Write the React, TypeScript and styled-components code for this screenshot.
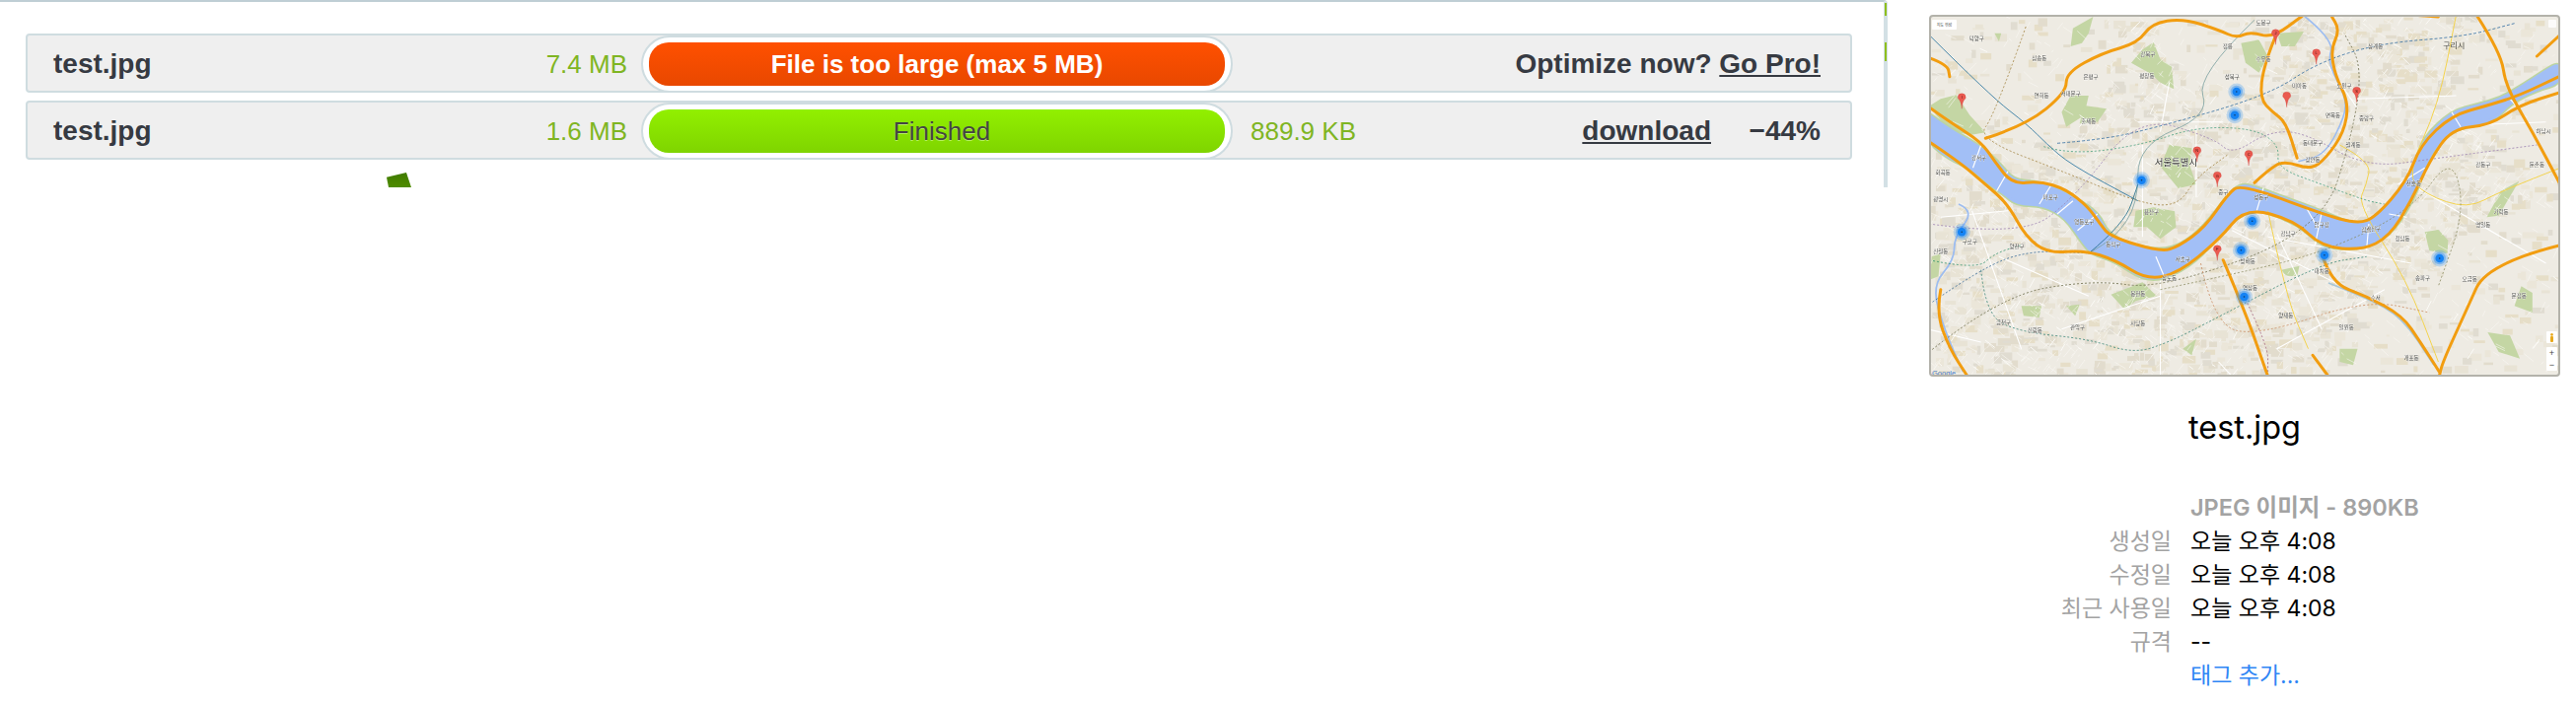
import React from "react";
import styled, { createGlobalStyle } from "styled-components";

const GlobalStyle = createGlobalStyle`
  html, body {
    margin: 0;
    padding: 0;
    background: #fff;
    overflow: hidden;
  }
`;

const Page = styled.div`
  display: flex;
  align-items: flex-start;
  width: 2612px;
  height: 714px;
  background: #fff;
`;

const Panel = styled.section`
  position: relative;
  box-sizing: border-box;
  flex: none;
  width: 1914px;
  height: 190px;
  padding: 32px 32px 0 26px;
  border-top: 2px solid #bfced5;
  border-right: 4px solid #d3e0e5;
  border-top-right-radius: 4px;
  display: flex;
  flex-direction: column;
  gap: 8px;
  font-family: "Liberation Sans", Arial, sans-serif;
  color: #363a42;
`;

const Row = styled.div`
  box-sizing: border-box;
  height: 60px;
  background: #efefef;
  border: 2px solid #cfdce0;
  border-radius: 4px;
  display: grid;
  grid-template-columns: 622px 600px 1fr;
  align-items: center;
`;

const Source = styled.div`
  display: flex;
  justify-content: space-between;
  align-items: baseline;
  padding: 0 14px 0 26px;
`;

const Name = styled.span`
  font-size: 28px;
  font-weight: 700;
`;

const Size = styled.span`
  font-size: 26px;
  color: #7fb523;
`;

const Pill = styled.div`
  box-sizing: border-box;
  height: 58px;
  padding: 5px 6px;
  background: #fff;
  border: 2px solid #cfdce0;
  border-radius: 29px;
`;

const Progress = styled.div<{ $tone: "error" | "done" }>`
  box-sizing: border-box;
  height: 44px;
  padding-left: ${(p) => (p.$tone === "done" ? "10px" : "0")};
  border-radius: 20px;
  display: flex;
  align-items: center;
  justify-content: center;
  font-size: 26px;
  font-weight: ${(p) => (p.$tone === "error" ? 700 : 400)};
  color: ${(p) => (p.$tone === "error" ? "#fff" : "#444")};
  text-shadow: ${(p) => (p.$tone === "done" ? "0 1px 0 #b6f060" : "none")};
  background: ${(p) =>
    p.$tone === "error"
      ? "linear-gradient(#ff5000, #e84800)"
      : "linear-gradient(#92f000, #7fd400)"};
`;

const Result = styled.div`
  display: flex;
  align-items: baseline;
  padding: 0 30px 0 18px;
  font-size: 28px;
`;

const Notice = styled.span`
  margin-left: auto;
  font-weight: 700;
`;

const Action = styled.a`
  color: inherit;
  font-weight: 700;
  text-decoration: underline;
`;

const Download = styled(Action)`
  margin-left: auto;
`;

const Saving = styled.span`
  flex: none;
  width: 111px;
  text-align: right;
  font-weight: 700;
`;

const Leaf = styled.div`
  position: absolute;
  left: 392px;
  top: 173px;
  width: 25px;
  height: 15px;
  background: linear-gradient(#3f7a00, #4f8c00);
  clip-path: polygon(0 32%, 80% 0, 100% 100%, 8% 100%);
`;

const Sliver = styled.div<{ $top: number; $height: number }>`
  position: absolute;
  right: -3px;
  top: ${(p) => p.$top}px;
  width: 2px;
  height: ${(p) => p.$height}px;
  background: #8fbf1e;
`;

const Details = styled.aside`
  flex: none;
  box-sizing: border-box;
  width: 640px;
  margin: 15px 0 0 42px;
`;

const MapFrame = styled.div`
  position: relative;
  box-sizing: border-box;
  width: 640px;
  height: 367px;
  border: 2px solid #b3b2aa;
  border-radius: 4px;
  overflow: hidden;
  background: #eeebe3;
`;

const MapArt = styled.svg`
  display: block;
  position: absolute;
  left: -2px;
  top: -2px;
  width: 640px;
  height: 367px;
  filter: blur(0.5px);
`;

const MapControl = styled.div`
  position: absolute;
  background: #fff;
  color: #444;
  border-radius: 1px;
  font-family: "Noto Sans CJK KR", "Liberation Sans", sans-serif;
`;

const TypeControl = styled(MapControl)`
  left: 1px;
  top: 3px;
  width: 25px;
  height: 10px;
  font-size: 4px;
  line-height: 10px;
  text-align: center;
`;

const ZoomControl = styled(MapControl)`
  right: 1px;
  bottom: 4px;
  width: 11px;
  height: 24px;
  font-size: 9px;
  line-height: 12px;
  text-align: center;
  font-family: "Liberation Sans", sans-serif;
`;

const Pegman = styled(MapControl)`
  right: 1px;
  bottom: 32px;
  width: 11px;
  height: 12px;
  display: flex;
  align-items: center;
  justify-content: center;
`;

const FullScreen = styled(MapControl)`
  right: 2px;
  top: 3px;
  width: 8px;
  height: 8px;
  opacity: 0.8;
`;

const GoogleMark = styled.span`
  position: absolute;
  left: 1px;
  bottom: -3px;
  font-family: "Liberation Sans", sans-serif;
  font-size: 7.5px;
  color: #4a7fd0;
`;

const FileTitle = styled.h2`
  margin: 32px 0 0;
  text-align: center;
  font-family: Inter, "Liberation Sans", sans-serif;
  font-size: 32.5px;
  line-height: 40px;
  font-weight: 400;
  color: #000;
`;

const InfoGrid = styled.dl`
  margin: 43px 0 0;
  display: grid;
  grid-template-columns: 246px 1fr;
  column-gap: 19px;
  font-family: Inter, "Noto Sans CJK KR", sans-serif;
  font-size: 23px;
  line-height: 34px;
`;

const Kind = styled.dd`
  grid-column: 2;
  margin: 0;
  color: #a3a3a3;
  font-size: 23.5px;
  line-height: 35px;
  font-weight: 600;
`;

const Label = styled.dt`
  grid-column: 1;
  color: #a3a3a3;
  text-align: right;
`;

const Value = styled.dd`
  grid-column: 2;
  margin: 0;
  color: #000;
`;

const TagLink = styled.a`
  grid-column: 2;
  color: #2f86f5;
`;

// the map art is traced from the reference, in a 1408x1100 space
const sx = (x: number) => +((x - 124) / 2.2).toFixed(1);
const sy = (y: number) => +((y - 44) / 3).toFixed(1);

function line(flat: number[]) {
  const pts: [number, number][] = [];
  for (let i = 0; i < flat.length; i += 2) pts.push([sx(flat[i]), sy(flat[i + 1])]);
  let d = `M${pts[0][0]} ${pts[0][1]}`;
  for (let i = 1; i < pts.length - 1; i++) {
    const mx = (pts[i][0] + pts[i + 1][0]) / 2;
    const my = (pts[i][1] + pts[i + 1][1]) / 2;
    d += `Q${pts[i][0]} ${pts[i][1]} ${mx.toFixed(1)} ${my.toFixed(1)}`;
  }
  const last = pts[pts.length - 1];
  return d + `L${last[0]} ${last[1]}`;
}

function polygon(flat: number[]) {
  const pts: string[] = [];
  for (let i = 0; i < flat.length; i += 2) pts.push(`${sx(flat[i])},${sy(flat[i + 1])}`);
  return pts.join(" ");
}

const river = [
  124, 350, 170, 395, 230, 440, 275, 490, 310, 550, 360, 555, 400, 570, 450, 605, 500, 650, 520, 710,
  570, 745, 640, 765, 690, 745, 740, 690, 790, 600, 820, 560, 860, 575, 930, 610, 1000, 645, 1060, 680,
  1100, 680, 1140, 640, 1190, 560, 1210, 500, 1230, 420, 1290, 340, 1350, 320, 1400, 300, 1450, 260,
  1500, 215, 1532, 190, 1532, 250, 1480, 270, 1420, 310, 1380, 370, 1300, 385, 1260, 430, 1230, 500,
  1210, 580, 1170, 680, 1120, 740, 1060, 755, 1000, 745, 960, 690, 900, 650, 840, 630, 800, 670, 770, 710,
  720, 790, 650, 845, 600, 845, 540, 790, 490, 770, 470, 740, 430, 660, 380, 622, 320, 620, 290, 585,
  260, 560, 220, 510, 170, 480, 124, 430,
];

const highways = [
  [124, 325, 170, 370, 240, 430, 270, 490, 310, 560, 370, 550, 430, 575, 480, 630, 505, 680, 530, 720, 640, 765, 680, 750, 740, 690, 790, 590, 820, 558, 1000, 650, 1080, 680, 1120, 660, 1190, 550, 1220, 440, 1290, 350, 1370, 320, 1440, 290, 1532, 230],
  [124, 430, 190, 490, 250, 560, 300, 620, 340, 720, 390, 770, 470, 760, 540, 790, 610, 850, 680, 830, 770, 730, 830, 630, 940, 670, 1000, 750, 1090, 760, 1150, 720, 1200, 610, 1240, 490, 1290, 390, 1375, 380, 1440, 320, 1532, 280],
  [250, 420, 340, 380, 430, 280, 430, 220, 510, 160, 590, 130, 620, 70, 690, 55, 770, 90, 810, 115, 840, 95, 890, 115, 960, 44],
  [895, 115, 870, 200, 862, 300, 890, 340, 920, 370, 945, 480],
  [850, 555, 890, 505, 920, 490, 975, 515, 1010, 480, 1050, 400, 1060, 310, 1030, 230, 1020, 150, 1040, 90, 1020, 44],
  [780, 790, 830, 950, 880, 1144],
  [1345, 44, 1400, 160, 1410, 260, 1470, 400, 1532, 560],
  [1532, 745, 1370, 800, 1320, 950, 1270, 1100, 1262, 1144],
  [1000, 770, 1020, 860, 1100, 900, 1180, 960, 1220, 1040, 1262, 1130],
  [150, 880, 140, 950, 170, 1060, 210, 1144],
  [980, 1080, 1015, 1144],
  [124, 175, 165, 195, 170, 232],
  [1200, 44, 1260, 50],
  [1480, 170, 1532, 105],
];

const yellowRoads = [
  [1532, 510, 1400, 580, 1325, 635, 1230, 590, 1190, 530, 1260, 320, 1300, 44],
  [1040, 440, 1110, 490, 1100, 560, 1080, 620, 1190, 850, 1260, 1100],
  [880, 640, 920, 900, 970, 1060],
];

const subways: { color: string; dash?: string; d: number[] }[] = [
  { color: "#1f6f9c", d: [124, 105, 260, 290, 345, 380, 385, 435, 440, 500, 590, 610] },
  { color: "#2c6aa0", dash: "3 2", d: [410, 435, 500, 425, 610, 395, 880, 290, 990, 190, 1130, 130, 1320, 110, 1430, 70] },
  { color: "#3e9a78", dash: "2 2", d: [380, 445, 440, 470, 600, 440, 720, 385, 850, 390, 905, 440, 900, 510, 1000, 560, 1100, 610, 1140, 620] },
  { color: "#9a7fb0", dash: "2 2", d: [124, 680, 330, 720, 450, 600, 590, 350, 760, 420, 800, 470, 880, 400, 960, 400, 1100, 510, 1260, 480, 1480, 440] },
  { color: "#a0803c", dash: "2 2", d: [340, 80, 270, 350, 230, 420, 440, 530, 600, 620, 680, 625, 720, 540, 790, 470] },
  { color: "#7aa0a0", d: [850, 60, 720, 230, 750, 350, 590, 440, 590, 620, 540, 720, 480, 770] },
  { color: "#1c6a88", d: [480, 770, 560, 680, 590, 560] },
  { color: "#2d8f6a", dash: "2 2", d: [124, 790, 230, 820, 270, 770, 330, 745] },
  { color: "#2f7f70", dash: "2 2", d: [240, 820, 250, 960, 330, 1010, 480, 1030, 580, 1075, 660, 1040, 760, 970, 1000, 800, 1100, 780] },
  { color: "#285f90", dash: "2 2", d: [124, 925, 240, 815, 350, 760, 490, 770] },
  { color: "#6a6a48", dash: "2 2", d: [124, 1070, 280, 900, 490, 850, 640, 880, 1000, 700, 1070, 400, 1090, 200, 1050, 100] },
  { color: "#a05c78", dash: "2 2", d: [830, 910, 880, 1050, 880, 1130] },
  { color: "#c98a60", dash: "2 2", d: [730, 800, 760, 990, 860, 1020, 1100, 910, 1240, 950] },
  { color: "#8a8a60", dash: "2 2", d: [640, 880, 780, 840, 1000, 770, 1200, 640, 1290, 470, 1320, 640, 1260, 870] },
];

const parks = [
  [124, 322, 150, 300, 185, 288, 215, 350, 250, 402, 215, 410, 185, 400, 150, 365],
  [585, 640, 625, 630, 672, 642, 675, 690, 640, 726, 610, 690, 580, 690],
  [600, 150, 625, 128, 640, 180, 665, 200, 670, 270, 640, 250, 620, 225, 575, 190],
  [445, 85, 490, 50, 480, 100, 465, 130, 440, 140],
  [820, 130, 860, 120, 880, 170, 860, 220, 830, 190],
  [1230, 705, 1260, 698, 1282, 730, 1280, 770, 1240, 762],
  [530, 895, 600, 858, 632, 900, 585, 915, 560, 940],
  [1370, 1010, 1420, 1020, 1442, 1090, 1395, 1070],
  [1445, 870, 1470, 890, 1470, 950, 1430, 930],
  [440, 290, 480, 290, 470, 350, 430, 385, 420, 340],
  [660, 440, 710, 450, 705, 500, 720, 560, 680, 572, 640, 505],
  [1368, 660, 1400, 580, 1440, 550, 1395, 655],
  [910, 820, 950, 808, 945, 840, 920, 838],
  [330, 930, 375, 930, 370, 965, 335, 960],
  [530, 730, 560, 745, 530, 765],
  [900, 100, 960, 95, 940, 140, 910, 140],
  [270, 100, 285, 100, 280, 125],
  [470, 320, 520, 330, 500, 370, 460, 375],
  [130, 780, 150, 770, 145, 840, 125, 850],
  [430, 930, 460, 925, 450, 960],
  [690, 1060, 720, 1030, 710, 1080],
  [1040, 1060, 1080, 1060, 1070, 1110, 1040, 1100],
];

const bridges = [
  [222, 510, 240, 440], [275, 580, 300, 520], [370, 620, 395, 565], [410, 650, 445, 610],
  [455, 700, 500, 650], [630, 780, 650, 845], [870, 570, 855, 640], [965, 630, 990, 690],
  [1000, 645, 985, 745], [1150, 650, 1190, 660], [1105, 680, 1100, 760], [1230, 510, 1170, 560],
  [1290, 340, 1310, 385], [1420, 300, 1440, 330],
];

const mainRoads = [
  [590, 370, 780, 370], [720, 380, 720, 600], [600, 440, 600, 720], [800, 700, 1060, 880],
  [900, 710, 1000, 1000], [640, 850, 640, 1144], [880, 720, 1200, 800], [220, 640, 330, 1060],
  [150, 660, 300, 640], [120, 1000, 240, 1040], [1080, 300, 1300, 290], [1200, 560, 1500, 800],
  [1320, 380, 1500, 370], [770, 1100, 800, 1144], [660, 250, 640, 400], [1010, 190, 1080, 330],
  [280, 780, 480, 900], [420, 1000, 640, 900], [900, 1060, 1140, 880],
];

const labels: [string, number, number][] = [
  ["은평구", 485, 240], ["서대문구", 440, 290], ["마포구", 395, 605], ["영등포구", 470, 680],
  ["용산구", 620, 650], ["중구", 780, 590], ["성동구", 865, 605], ["광진구", 1115, 700],
  ["강남구", 925, 715], ["서초구", 690, 795], ["동작구", 535, 750], ["관악구", 455, 1000],
  ["구로구", 215, 740], ["금천구", 290, 985], ["강서구", 235, 485], ["노원구", 1050, 265],
  ["도봉구", 870, 75], ["강북구", 612, 170], ["성북구", 800, 240], ["중랑구", 1100, 365],
  ["동대문구", 980, 440], ["송파구", 1225, 850], ["강동구", 1360, 505], ["하남시", 1495, 405],
  ["양천구", 320, 755], ["압구정", 1000, 688], ["수서", 1120, 910], ["일원동", 1055, 1000],
  ["개포동", 1200, 1095], ["양재동", 920, 965], ["사당동", 590, 990], ["신림동", 360, 1010],
  ["광명시", 150, 610], ["덕양구", 230, 122], ["삼송동", 370, 182], ["상계동", 1120, 145],
  ["면목동", 1025, 355], ["잠실", 1100, 705], ["천호동", 1205, 562], ["방배동", 835, 800],
  ["연희동", 375, 295], ["홍제동", 480, 375], ["평창동", 610, 235], ["정릉", 790, 145],
  ["수유동", 870, 185], ["미아동", 950, 265], ["월계동", 1070, 445], ["장안동", 980, 490],
  ["청담동", 1180, 730], ["가락동", 1400, 650], ["둔촌동", 1480, 505], ["명일동", 1360, 690],
  ["신월동", 150, 770], ["화곡동", 155, 530], ["오금동", 1330, 855], ["문정동", 1440, 905],
  ["봉천동", 590, 900], ["상도동", 660, 850], ["대치동", 1000, 830], ["역삼동", 840, 880],
];

const redPins = [
  [897, 105, "J"], [988, 165, "L"], [1078, 280, "S"], [922, 295, ""], [197, 300, "I"],
  [722, 462, "N"], [837, 473, "C"], [767, 538, "G"], [767, 762, "F"],
] as [number, number, string][];

const clusters = [
  [810, 278], [806, 349], [598, 547], [197, 705], [845, 672], [820, 760], [1006, 775], [1263, 785], [827, 902],
];

// small seeded generator, the street texture has to stay the same on every render
function seeded(seed: number) {
  let s = seed;
  return () => {
    s = (s * 16807) % 2147483647;
    return s / 2147483647;
  };
}

const rnd = seeded(20160);

// open land sits in the top-left, far right and bottom-right of the map
function openness(x: number, y: number) {
  const corners = [
    [60, 30, 120],
    [610, 300, 110],
    [500, 350, 90],
    [620, 60, 90],
    [300, 10, 60],
  ];
  return corners.some(([cx, cy, r]) => (x - cx) ** 2 + (y - cy) ** 2 < r * r) ? 0.25 : 1;
}

const blocks = Array.from({ length: 2600 }, () => ({
  x: rnd() * 640,
  y: rnd() * 367,
  w: 3 + rnd() * 11,
  h: 2 + rnd() * 7,
  fill: ["#e8e3d5", "#e2dccd", "#ebe6d9", "#e0dcd1", "#e6dec8"][Math.floor(rnd() * 5)],
  keep: rnd(),
})).filter((b) => b.keep < openness(b.x, b.y));

const streets = Array.from({ length: 3000 }, () => {
  const x = rnd() * 640;
  const y = rnd() * 367;
  const a = rnd() > 0.5 ? 0.4 + rnd() * 0.4 : 2.0 + rnd() * 0.4;
  const l = 2 + rnd() * 11;
  return { x, y, x2: x + Math.cos(a) * l, y2: y + Math.sin(a) * l, w: rnd() > 0.9 ? 1 : 0.55, keep: rnd() };
}).filter((s) => s.keep < openness(s.x, s.y));

function SeoulMap() {
  return (
    <MapArt viewBox="0 0 640 367" aria-hidden="true">
      {blocks.map((b, i) => (
        <rect key={i} x={b.x} y={b.y} width={b.w} height={b.h} fill={b.fill} />
      ))}
      {parks.map((p, i) => (
        <polygon key={i} points={polygon(p)} fill="#c4d6a4" />
      ))}
      {streets.map((s, i) => (
        <line key={i} x1={s.x} y1={s.y} x2={s.x2} y2={s.y2} stroke="#fbfaf6" strokeWidth={s.w} />
      ))}
      {mainRoads.map((r, i) => (
        <line key={i} x1={sx(r[0])} y1={sy(r[1])} x2={sx(r[2])} y2={sy(r[3])} stroke="#fff" strokeWidth="1.1" />
      ))}
      <path d={line([...river, river[0], river[1]]) + "Z"} fill="#bcd5a0" stroke="#bcd5a0" strokeWidth="6" />
      <path d={line([...river, river[0], river[1]]) + "Z"} fill="#a2bff6" stroke="#a2bff6" strokeWidth="3" />
      {bridges.map((b, i) => (
        <line key={i} x1={sx(b[0])} y1={sy(b[1])} x2={sx(b[2])} y2={sy(b[3])} stroke="#fff" strokeWidth="1.2" />
      ))}
      <path d={line([960, 44, 1030, 120, 1015, 190, 1055, 290, 1055, 350, 1010, 470, 950, 490])} fill="none" stroke="#9cbcf0" strokeWidth="1.6" transform="translate(-1 0)" />
      <path d={line([190, 620, 225, 640, 180, 720, 180, 790, 130, 870, 160, 1010, 200, 1130])} fill="none" stroke="#9cbcf0" strokeWidth="1.8" />
      <path d={line([1015, 860, 1100, 905, 1180, 965, 1250, 1110])} fill="none" stroke="#a8c6d8" strokeWidth="1.6" />
      {yellowRoads.map((d, i) => (
        <path key={i} d={line(d)} fill="none" stroke="#f3d34e" strokeWidth="1" />
      ))}
      {subways.map((s, i) => (
        <path key={i} d={line(s.d)} fill="none" stroke={s.color} strokeWidth="0.8" strokeDasharray={s.dash} />
      ))}
      {highways.map((d, i) => (
        <path key={i} d={line(d)} fill="none" stroke="#f29d10" strokeWidth="3" strokeLinejoin="round" strokeLinecap="round" />
      ))}
      <g fontFamily={'"Noto Sans CJK KR", sans-serif'} fill="#4a4a44" fontSize="5.5" textAnchor="middle">
        {labels.map(([t, x, y]) => (
          <text key={t} x={sx(x)} y={sy(y)} stroke="#fff" strokeWidth="0.5" paintOrder="stroke">
            {t}
          </text>
        ))}
        <text x={sx(675)} y={sy(503)} fontSize="9.5" fill="#33332e" stroke="#fff" strokeWidth="0.7" paintOrder="stroke">
          서울특별시
        </text>
        <text x={sx(1295)} y={sy(145)} fontSize="8">
          구리시
        </text>
      </g>
      {clusters.map(([x, y], i) => (
        <g key={i} transform={`translate(${sx(x)} ${sy(y)})`}>
          <circle r="8.5" fill="#3b96f2" opacity="0.28" />
          <circle r="6.2" fill="#3b96f2" opacity="0.5" />
          <circle r="4.3" fill="#1583f4" />
          <circle r="0.8" fill="#123a66" />
        </g>
      ))}
      {redPins.map(([x, y, t], i) => (
        <g key={i} transform={`translate(${sx(x)} ${sy(y)})`}>
          <path d="M0 10C-.8-.5-4 1-4-1.5A4 4 0 1 1 4-1.5C4 1 .8-.5 0 10Z" fill="#ea5a50" stroke="#c8413a" strokeWidth="0.3" />
          <text y="0" textAnchor="middle" fontSize="4" fill="#4a1512" fontFamily={'"Liberation Sans", sans-serif'}>
            {t}
          </text>
        </g>
      ))}
    </MapArt>
  );
}

export default function App() {
  return (
    <Page>
      <GlobalStyle />
      <Panel>
        <Row>
          <Source>
            <Name>test.jpg</Name>
            <Size>7.4 MB</Size>
          </Source>
          <Pill>
            <Progress $tone="error">File is too large (max 5 MB)</Progress>
          </Pill>
          <Result>
            <Notice>
              Optimize now? <Action>Go Pro!</Action>
            </Notice>
          </Result>
        </Row>
        <Row>
          <Source>
            <Name>test.jpg</Name>
            <Size>1.6 MB</Size>
          </Source>
          <Pill>
            <Progress $tone="done">Finished</Progress>
          </Pill>
          <Result>
            <Size>889.9 KB</Size>
            <Download>download</Download>
            <Saving>−44%</Saving>
          </Result>
        </Row>
        <Leaf />
        <Sliver $top={1} $height={13} />
        <Sliver $top={41} $height={19} />
      </Panel>
      <Details>
        <MapFrame>
          <SeoulMap />
          <TypeControl>지도 위성</TypeControl>
          <FullScreen />
          <Pegman>
            <svg width="5" height="9" viewBox="0 0 5 9">
              <circle cx="2.5" cy="1.4" r="1.3" fill="#e8a91c" />
              <rect x="1" y="3" width="3" height="6" rx="1" fill="#e8a91c" />
            </svg>
          </Pegman>
          <ZoomControl>
            +
            <br />−
          </ZoomControl>
          <GoogleMark>Google</GoogleMark>
        </MapFrame>
        <FileTitle>test.jpg</FileTitle>
        <InfoGrid>
          <Kind>JPEG 이미지 - 890KB</Kind>
          <Label>생성일</Label>
          <Value>오늘 오후 4:08</Value>
          <Label>수정일</Label>
          <Value>오늘 오후 4:08</Value>
          <Label>최근 사용일</Label>
          <Value>오늘 오후 4:08</Value>
          <Label>규격</Label>
          <Value>--</Value>
          <TagLink>태그 추가...</TagLink>
        </InfoGrid>
      </Details>
    </Page>
  );
}
